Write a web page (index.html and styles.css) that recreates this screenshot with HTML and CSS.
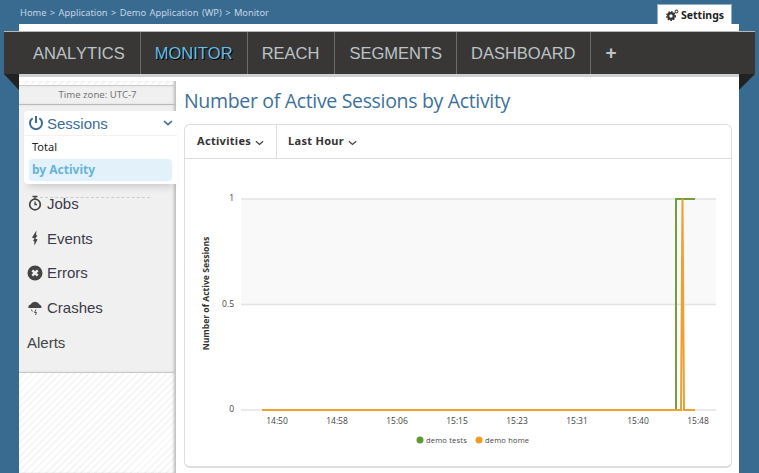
FILE: index.html
```html
<!DOCTYPE html>
<html lang="en">
<head>
    <meta charset="UTF-8">
    <title>Monitor</title>
    <link rel="stylesheet" href="styles.css">
</head>
<body>

    <div class="topbar">
        <div class="breadcrumb">Home &gt; Application &gt; Demo Application (WP) &gt; Monitor</div>
        <div class="settings-tab">
            <svg viewBox="0 0 13 12" width="13" height="12">
                <circle cx="5" cy="7" r="2.8" fill="none" stroke="#333" stroke-width="2.2"/>
                <circle cx="5" cy="7" r="4.4" fill="none" stroke="#333" stroke-width="1.2" stroke-dasharray="1.6 1.3"/>
                <circle cx="10.5" cy="2.5" r="1.4" fill="none" stroke="#555" stroke-width="1.1"/>
            </svg>
            Settings
        </div>
    </div>

    <div class="page">
        <div class="nav">
            <div class="nav-item first">ANALYTICS</div>
            <div class="nav-item active">MONITOR</div>
            <div class="nav-item wide">REACH</div>
            <div class="nav-item">SEGMENTS</div>
            <div class="nav-item">DASHBOARD</div>
            <div class="nav-item plus">+</div>
            <div class="fold fold-left"></div>
            <div class="fold fold-right"></div>
        </div>
        <div class="nav-strip"></div>

        <div class="content">
            <div class="sidebar">
                <div class="timezone">Time zone: UTC-7</div>
                <div class="sidebar-list">
                    <div class="session-card">
                        <div class="session-head">
                            <svg viewBox="0 0 16 16" width="16" height="16">
                                <path d="M4.6 3.2a6 6 0 1 0 6.8 0" fill="none" stroke="#3a6d96" stroke-width="2"/>
                                <path d="M8 1v7" stroke="#3a6d96" stroke-width="2"/>
                            </svg>
                            <span>Sessions</span>
                            <svg class="session-chevron" viewBox="0 0 10 6" width="10" height="6">
                                <path d="M1 1l4 3.6L9 1" fill="none" stroke="#3a6d96" stroke-width="1.6"/>
                            </svg>
                        </div>
                        <div class="sub-item">Total</div>
                        <div class="sub-item selected">by Activity</div>
                    </div>
                    <div class="menu-item jobs">
                        <svg viewBox="0 0 16 16" width="16" height="16">
                            <circle cx="8" cy="9.5" r="5.3" fill="none" stroke="#444" stroke-width="1.7"/>
                            <path d="M5.5 1.5h5M8 1.5v2.5M8 6.5v3h2" fill="none" stroke="#444" stroke-width="1.3"/>
                        </svg>
                        <span>Jobs</span>
                        <div class="dash-row"></div>
                    </div>
                    <div class="menu-item">
                        <svg viewBox="0 0 16 16" width="16" height="16">
                            <path d="M9.5 0.5L5 7.5l2.5 1L6 11h1.2L7.5 15.5 10.5 9.5 8.2 8.5 10.5 5.5 9 5z" fill="#444"/>
                        </svg>
                        <span>Events</span>
                    </div>
                    <div class="menu-item">
                        <svg viewBox="0 0 16 16" width="16" height="16">
                            <circle cx="8" cy="8" r="7.5" fill="#444"/>
                            <path d="M5.3 5.3l5.4 5.4M10.7 5.3l-5.4 5.4" stroke="#f0f0f0" stroke-width="2.4"/>
                        </svg>
                        <span>Errors</span>
                    </div>
                    <div class="menu-item">
                        <svg viewBox="0 0 16 16" width="16" height="16">
                            <path d="M1.5 8a3 3 0 0 1 2-3.5A5 5 0 0 1 12.5 4.5 3.2 3.2 0 0 1 14.5 8z" fill="#444"/>
                            <path d="M4.5 9.5l0.8 2M9 9.5l-1.5 3h2l-1 2.5" fill="none" stroke="#555" stroke-width="1"/>
                        </svg>
                        <span>Crashes</span>
                    </div>
                    <div class="menu-item alerts"><span>Alerts</span></div>
                </div>
                <div class="hatch"></div>
            </div>

            <div class="main">
                <h1 class="title">Number of Active Sessions by Activity</h1>
                <div class="chart-card">
                    <div class="toolbar">
                        <div class="tool"><span>Activities</span>
                            <svg viewBox="0 0 10 6" width="9" height="6"><path d="M1 1l4 3.6L9 1" fill="none" stroke="#444" stroke-width="1.5"/></svg>
                        </div>
                        <div class="tool"><span>Last Hour</span>
                            <svg viewBox="0 0 10 6" width="9" height="6"><path d="M1 1l4 3.6L9 1" fill="none" stroke="#444" stroke-width="1.5"/></svg>
                        </div>
                    </div>
                    <svg class="chart" viewBox="185 159 546 308" width="546" height="308">
                        <rect x="241" y="199" width="475" height="105" fill="#f9f9f9"/>
                        <path d="M241 199H716M241 304.5H716M241 410H716" stroke="#e4e4e4" stroke-width="1.5" fill="none"/>

                        <text class="axis-title" transform="translate(209 293.5) rotate(-90)" text-anchor="middle">Number of Active Sessions</text>
                        <text class="tick" x="234" y="201" text-anchor="end">1</text>
                        <text class="tick" x="234" y="307" text-anchor="end">0.5</text>
                        <text class="tick" x="234" y="412" text-anchor="end">0</text>

                        <text class="tick" x="277" y="424" text-anchor="middle">14:50</text>
                        <text class="tick" x="337" y="424" text-anchor="middle">14:58</text>
                        <text class="tick" x="397" y="424" text-anchor="middle">15:06</text>
                        <text class="tick" x="457" y="424" text-anchor="middle">15:15</text>
                        <text class="tick" x="517" y="424" text-anchor="middle">15:23</text>
                        <text class="tick" x="577" y="424" text-anchor="middle">15:31</text>
                        <text class="tick" x="638" y="424" text-anchor="middle">15:40</text>
                        <text class="tick" x="698" y="424" text-anchor="middle">15:48</text>

                        <path d="M262 410H676V199H695" fill="none" stroke="#6fa23c" stroke-width="2"/>
                        <path d="M262 410H681L682.5 199L684 410H695" fill="none" stroke="#f0a030" stroke-width="2"/>

                        <circle cx="420" cy="440" r="3.5" fill="#5f9a30"/>
                        <text class="legend" x="426" y="443">demo tests</text>
                        <circle cx="479" cy="440" r="3.5" fill="#f59a23"/>
                        <text class="legend" x="485" y="443">demo home</text>
                    </svg>
                </div>
            </div>
        </div>
    </div>

</body>
</html>
```

FILE: styles.css
```css
html, body {
    height: 100%;
}
body {
    margin: 0;
    background-color: #396a90;
    overflow: hidden;
    font-family: "Liberation Sans", Arial, sans-serif;
}
.topbar {
    display: flex;
    justify-content: space-between;
    height: 24px;
    padding: 0 27px 0 20px;
}
.breadcrumb {
    margin-top: 7px;
    font-family: "Noto Sans", sans-serif;
    font-size: 9.3px;
    line-height: 12px;
    word-spacing: 1px;
    color: #c2d6e6;
}
.settings-tab {
    display: flex;
    align-items: center;
    gap: 2px;
    box-sizing: border-box;
    width: 75px;
    height: 20px;
    margin-top: 4px;
    padding-left: 8px;
    background-color: #fff;
    border: 1px solid #8fb0c8;
    border-bottom: 0;
    font-family: "Noto Sans", sans-serif;
    font-size: 10.5px;
    font-weight: bold;
    color: #222;
}
.page {
    margin: 0 20px 0 19px;
    padding-top: 7px;
    height: 442px;
    background-color: #fff;
}
.nav {
    position: relative;
    display: flex;
    height: 43px;
    margin: 0 -16px 0 -15px;
    padding-left: 14px;
    box-sizing: border-box;
    background-color: #393735;
    border-top: 1px solid #b9b9b9;
}
.nav-item {
    padding: 0 14px 0 14px;
    border-right: 1px solid #6e6c6a;
    font-size: 16.5px;
    font-kerning: none;
    line-height: 42px;
    color: #bcc3c8;
}
.nav-item.first {
    padding: 0 15px 0 15px;
}
.nav-item.wide {
    padding: 0 15px 0 14px;
}
.nav-item.active {
    color: #62bde8;
    text-shadow: 1px 1px 0 #000;
}
.nav-item.plus {
    border-right: 0;
    padding-left: 15px;
    font-size: 19px;
    font-weight: bold;
}
.fold {
    position: absolute;
    top: 42px;
    width: 0;
    height: 0;
    border-top: 16px solid #222;
}
.fold-left {
    left: 0;
    border-left: 15px solid transparent;
}
.fold-right {
    right: 0;
    border-right: 16px solid transparent;
}
.nav-strip {
    height: 3px;
    background-color: #d0d0d0;
}
.content {
    display: flex;
    height: 396px;
}
.sidebar {
    display: flex;
    flex-direction: column;
    width: 157px;
    margin-top: 4px;
    flex-shrink: 0;
    padding-top: 4px;
    box-sizing: border-box;
    box-shadow: inset -3px 0 3px -1px #bbb;
    background: repeating-linear-gradient(135deg, #f6f6f6 0, #f6f6f6 2px, #fff 2px, #fff 5px);
}
.timezone {
    height: 18px;
    background-color: #f0f0f0;
    border-top: 1px solid #ccc;
    border-bottom: 1px solid #bbb;
    box-shadow: inset -3px 0 3px -1px #bbb;
    font-family: "Noto Sans", sans-serif;
    font-size: 9.6px;
    line-height: 18px;
    text-align: center;
    color: #777;
}
.sidebar-list {
    height: 268px;
    box-sizing: border-box;
    padding-top: 6px;
    background-color: #f0f0f0;
    border-bottom: 1px solid #c9c5c2;
    box-shadow: inset -3px 0 3px -1px #bbb;
}
.session-card {
    position: relative;
    z-index: 1;
    height: 73px;
    margin-left: 5px;
    margin-right: -1px;
    background-color: #fff;
    border-radius: 4px 0 0 4px;
    box-shadow: 0 7px 7px -4px rgba(0, 0, 0, 0.15);
}
.session-head {
    display: flex;
    align-items: center;
    height: 24px;
    padding-left: 4px;
    border-bottom: 1px solid #f2f2f2;
    font-size: 15px;
    color: #3a6d96;
}
.session-head span {
    margin-left: 3px;
}
.session-chevron {
    margin-left: auto;
    margin-right: 4px;
}
.sub-item {
    margin: 0 5px;
    padding-left: 3px;
    font-family: "Noto Sans", sans-serif;
    font-size: 11px;
    line-height: 22px;
    color: #222;
}
.sub-item.selected {
    margin-top: 1px;
    background-color: #e3f2fa;
    border-radius: 4px;
    font-size: 12px;
    font-weight: bold;
    color: #68b3d8;
}
.menu-item {
    position: relative;
    display: flex;
    align-items: center;
    gap: 4px;
    height: 34.75px;
    padding-left: 8px;
    font-size: 15px;
    color: #3b3b4a;
}
.menu-item.alerts {
    color: #444;
}
.menu-item.jobs {
    margin-top: 2px;
}
.dash-row {
    position: absolute;
    top: 11px;
    left: 21px;
    width: 110px;
    border-top: 1px dashed #ccc;
}
.hatch {
    flex: 1;
}
.main {
    flex: 1;
    padding: 10px 7px 0 8px;
}
.title {
    margin: 0 0 9px 0;
    font-family: "Open Sans", sans-serif;
    font-size: 19.5px;
    letter-spacing: -0.33px;
    font-weight: normal;
    line-height: 28px;
    color: #3d7199;
}
.chart-card {
    box-sizing: border-box;
    height: 344px;
    background-color: #fff;
    border: 1px solid #ddd;
    border-bottom-width: 2px;
    border-radius: 6px;
}
.toolbar {
    display: flex;
    height: 34px;
    box-sizing: border-box;
    border-bottom: 1px solid #ddd;
}
.tool {
    display: flex;
    align-items: center;
    gap: 4px;
    padding: 0 12px;
    border-right: 1px solid #ddd;
    font-family: "Noto Sans", sans-serif;
    font-size: 11px;
    font-weight: bold;
    letter-spacing: 0.3px;
    color: #333;
}
.tool span {
    margin-bottom: 2px;
}
.tool svg {
    margin-top: 2px;
}
.tool:last-child {
    border-right: 0;
    padding-left: 11px;
}
.chart {
    display: block;
}
.tick {
    font-family: "Open Sans", sans-serif;
    font-size: 8.5px;
    fill: #444;
}
.axis-title {
    font-family: "Open Sans", sans-serif;
    font-size: 8.6px;
    font-weight: bold;
    fill: #333;
}
.legend {
    font-family: "Open Sans", sans-serif;
    font-size: 7.5px;
    letter-spacing: 0.2px;
    fill: #444;
}
```
